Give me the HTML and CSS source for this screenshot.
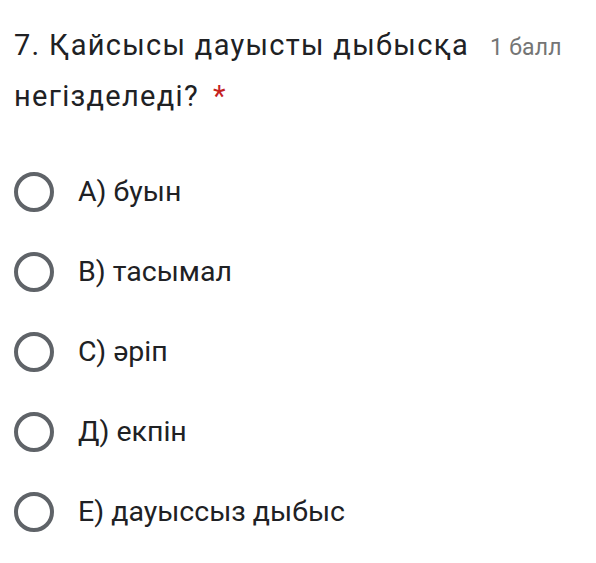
FILE: index.html
```html
<!DOCTYPE html>
<html lang="kk">
<head>
<meta charset="utf-8">
<link rel="stylesheet" href="styles.css">
</head>
<body>
<div class="question">
  <div class="title">
    <span class="text">7. Қайсысы дауысты дыбысқа</span><span class="points">1 балл</span><br>
    <span class="text">негізделеді?</span><span class="req">*</span>
  </div>
  <div class="options">
    <label class="option"><span class="radio"></span><span class="label">A) буын</span></label>
    <label class="option"><span class="radio"></span><span class="label">B) тасымал</span></label>
    <label class="option"><span class="radio"></span><span class="label">C) әріп</span></label>
    <label class="option"><span class="radio"></span><span class="label">Д) екпін</span></label>
    <label class="option"><span class="radio"></span><span class="label">E) дауыссыз дыбыс</span></label>
  </div>
</div>
</body>
</html>
```
FILE: styles.css
```css
html, body {
  margin: 0;
  padding: 0;
  background: #ffffff;
}
body {
  font-family: Roboto, "Noto Sans", sans-serif;
  color: #202124;
}
.question {
  padding: 21px 0 0 14px;
}
.title {
  font-size: 29px;
  letter-spacing: 1.3px;
  line-height: 48px;
}
.points {
  font-size: 23px;
  letter-spacing: 0.2px;
  color: #757575;
  margin-left: 21px;
}
.req {
  color: #c5221f;
  margin-left: 14px;
}
.options {
  margin-top: 52px;
  display: flex;
  flex-direction: column;
  gap: 40px;
}
.option {
  display: flex;
  align-items: center;
  height: 40px;
}
.radio {
  width: 40px;
  height: 40px;
  box-sizing: border-box;
  border: 4px solid #5f6368;
  border-radius: 50%;
  flex: none;
}
.label {
  margin-left: 24px;
  font-size: 28.5px;
  line-height: 40px;
}
```
